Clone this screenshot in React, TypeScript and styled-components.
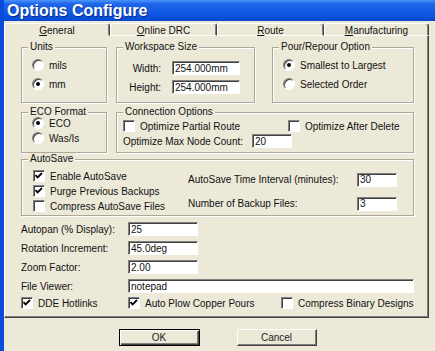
import React from 'react'
import styled, { createGlobalStyle } from 'styled-components'

const GlobalStyle = createGlobalStyle`
  html, body {
    margin: 0;
    padding: 0;
    background: #ece9d8;
  }
  body {
    font-family: 'Liberation Sans', Arial, sans-serif;
    font-size: 10px;
    color: #111;
  }
  * {
    box-sizing: border-box;
  }
`

const Window = styled.div`
  width: 435px;
  height: 351px;
  display: flex;
  flex-direction: column;
  border-left: 4px solid #0b4bdb;
  background: #ece9d8;
  overflow: hidden;
`

const TitleBar = styled.div`
  height: 21px;
  flex: none;
  display: flex;
  align-items: center;
  padding: 1px 0 0 3px;
  background: linear-gradient(180deg, #4a95fb 0%, #1f66ea 18%, #0c55e2 70%, #0848cf 100%);
  color: #fff;
  font-size: 16px;
  font-weight: 700;
  text-shadow: 1px 1px 0 #0a2a8a;
  white-space: nowrap;
`

const TabStrip = styled.div`
  height: 15px;
  flex: none;
  display: flex;
  padding-top: 2px;
`

const Tab = styled.div<{ $w: number; $active?: boolean }>`
  width: ${({ $w }) => $w}px;
  height: 13px;
  display: flex;
  align-items: center;
  justify-content: center;
  padding-top: 2px;
  border-top: 1px solid #fff;
  border-left: 1px solid #fff;
  border-right: 1px solid #404040;
  border-bottom: ${({ $active }) => ($active ? '1px solid #ece9d8' : '1px solid #fff')};
  border-radius: 3px 3px 0 0;
  box-shadow: inset -1px 0 0 #808080;
  white-space: nowrap;

  u {
    text-decoration: underline;
    text-underline-offset: 1px;
  }
`

const Panel = styled.div`
  width: 425px;
  height: 282px;
  flex: none;
  display: flex;
  flex-direction: column;
  padding: 11px 0 0 16px;
  border-left: 1px solid #fff;
  border-right: 1px solid #404040;
  border-bottom: 1px solid #404040;
  box-shadow: inset -1px -1px 0 #808080;
`

const GroupRow = styled.div<{ $mt?: number; $gap: number }>`
  display: flex;
  gap: ${({ $gap }) => $gap}px;
  margin-top: ${({ $mt }) => $mt ?? 0}px;
`

const Group = styled.div<{ $w: number; $h: number; $mr?: number }>`
  width: ${({ $w }) => $w}px;
  height: ${({ $h }) => $h}px;
  margin-right: ${({ $mr }) => $mr ?? 0}px;
  display: flex;
  flex-direction: column;
  border: 1px solid #aca899;
  box-shadow: inset 1px 1px 0 #fff, 1px 1px 0 #fff;
`

const Legend = styled.div`
  align-self: flex-start;
  height: 12px;
  line-height: 12px;
  margin: -7px 0 0 6px;
  padding: 0 2px;
  background: #ece9d8;
  white-space: nowrap;
`

const GroupBody = styled.div<{ $pt: number; $pl: number; $gap?: number }>`
  display: flex;
  flex-direction: column;
  gap: ${({ $gap }) => $gap ?? 5}px;
  margin-top: ${({ $pt }) => $pt}px;
  padding-left: ${({ $pl }) => $pl}px;
`

const Option = styled.label<{ $w?: number }>`
  display: flex;
  align-items: center;
  gap: 5px;
  height: 14px;
  white-space: nowrap;
  width: ${({ $w }) => ($w ? `${$w}px` : 'auto')};
  flex: none;
`

const Radio = styled.span<{ $on?: boolean }>`
  width: 12px;
  height: 12px;
  flex: none;
  display: flex;
  align-items: center;
  justify-content: center;
  border-radius: 50%;
  background: #fff;
  border: 1px solid;
  border-color: #808080 #fff #fff #808080;
  box-shadow: inset 1px 1px 0 #404040;

  &::after {
    content: '';
    width: 4px;
    height: 4px;
    border-radius: 50%;
    background: ${({ $on }) => ($on ? '#000' : 'transparent')};
  }
`

const Box = styled.span`
  width: 12px;
  height: 12px;
  flex: none;
  display: flex;
  align-items: center;
  justify-content: center;
  background: #fff;
  border: 1px solid;
  border-color: #808080 #fff #fff #808080;
  box-shadow: inset 1px 1px 0 #404040;
`

const TextBox = styled.input<{ $w: number }>`
  width: ${({ $w }) => $w}px;
  height: 14px;
  flex: none;
  margin: 0;
  padding: 0 0 0 2px;
  font: inherit;
  color: #111;
  background: #fff;
  border: 1px solid;
  border-color: #808080 #fff #fff #808080;
  box-shadow: inset 1px 1px 0 #404040;
  outline: none;
`

const SizeGrid = styled.div`
  display: grid;
  grid-template-columns: 34px 68px;
  column-gap: 11px;
  row-gap: 5px;
  align-items: center;
  justify-items: end;
  padding: 8px 0 0 10px;
`

const InlineRow = styled.div<{ $gap?: number }>`
  display: flex;
  align-items: center;
  gap: ${({ $gap }) => $gap ?? 0}px;
  height: 14px;
  white-space: nowrap;
`

const AutoSaveBody = styled.div`
  display: flex;
`

const AutoSaveLeft = styled.div`
  width: 166px;
  display: flex;
  flex-direction: column;
  gap: 1px;
  padding: 4px 0 0 11px;
`

const AutoSaveRight = styled.div`
  display: grid;
  grid-template-columns: 169px 40px;
  row-gap: 5px;
  align-items: center;
  padding-top: 5px;
  white-space: nowrap;
`

const Fields = styled.div`
  display: grid;
  grid-template-columns: 107px auto;
  row-gap: 5px;
  align-items: center;
  margin-top: 6px;
  white-space: nowrap;
`

const BottomChecks = styled.div`
  display: grid;
  grid-template-columns: 107px 153px auto;
  align-items: center;
  margin-top: 3px;
`

const ButtonRow = styled.div`
  display: flex;
  justify-content: center;
  gap: 37px;
  padding: 11px 4px 0 0;
`

const Button = styled.button<{ $w: number; $default?: boolean }>`
  width: ${({ $w }) => $w}px;
  height: 17px;
  margin: 0;
  padding: 0;
  font: inherit;
  color: #222;
  background: #ece9d8;
  border: 1px solid;
  border-color: ${({ $default }) => ($default ? '#000' : '#fff #404040 #404040 #fff')};
  box-shadow: ${({ $default }) =>
    $default
      ? 'inset 1px 1px 0 #fff, inset -1px -1px 0 #404040, inset -2px -2px 0 #808080'
      : 'inset -1px -1px 0 #808080'};
`

function Check({ on, label, w }: { on?: boolean; label: string; w?: number }) {
  return (
    <Option $w={w}>
      <Box>
        {on && (
          <svg width="10" height="10" viewBox="0 0 10 10">
            <polyline points="1.5,4.2 3.6,6.4 8,2" fill="none" stroke="#000" strokeWidth="1.8" />
          </svg>
        )}
      </Box>
      {label}
    </Option>
  )
}

function RadioOption({ on, label }: { on?: boolean; label: string }) {
  return (
    <Option>
      <Radio $on={on} />
      {label}
    </Option>
  )
}

const tabs = [
  { key: 'G', rest: 'eneral', w: 106, active: true },
  { key: 'O', rest: 'nline DRC', w: 107 },
  { key: 'R', rest: 'oute', w: 107 },
  { key: 'M', rest: 'anufacturing', w: 105 },
]

export default function App() {
  return (
    <>
      <GlobalStyle />
      <Window>
        <TitleBar>Options Configure</TitleBar>
        <TabStrip>
          {tabs.map((t) => (
            <Tab key={t.key} $w={t.w} $active={t.active}>
              <span>
                <u>{t.key}</u>
                {t.rest}
              </span>
            </Tab>
          ))}
        </TabStrip>
        <Panel>
          <GroupRow $gap={9}>
            <Group $w={86} $h={56}>
              <Legend>Units</Legend>
              <GroupBody $pt={5} $pl={10}>
                <RadioOption label="mils" />
                <RadioOption on label="mm" />
              </GroupBody>
            </Group>
            <Group $w={139} $h={56} $mr={8}>
              <Legend>Workspace Size</Legend>
              <SizeGrid>
                <span>Width:</span>
                <TextBox $w={68} readOnly value="254.000mm" />
                <span>Height:</span>
                <TextBox $w={68} readOnly value="254.000mm" />
              </SizeGrid>
            </Group>
            <Group $w={142} $h={56}>
              <Legend>Pour/Repour Option</Legend>
              <GroupBody $pt={5} $pl={10}>
                <RadioOption on label="Smallest to Largest" />
                <RadioOption label="Selected Order" />
              </GroupBody>
            </Group>
          </GroupRow>

          <GroupRow $gap={9} $mt={9}>
            <Group $w={86} $h={41}>
              <Legend>ECO Format</Legend>
              <GroupBody $pt={-2} $pl={10} $gap={1}>
                <RadioOption on label="ECO" />
                <RadioOption label="Was/Is" />
              </GroupBody>
            </Group>
            <Group $w={298} $h={41}>
              <Legend>Connection Options</Legend>
              <GroupBody $pt={1} $pl={6} $gap={1}>
                <InlineRow>
                  <Check label="Optimize Partial Route" w={165} />
                  <Check label="Optimize After Delete" />
                </InlineRow>
                <InlineRow $gap={9}>
                  <span>Optimize Max Node Count:</span>
                  <TextBox $w={40} readOnly value="20" />
                </InlineRow>
              </GroupBody>
            </Group>
          </GroupRow>

          <GroupRow $gap={0} $mt={6}>
            <Group $w={393} $h={57}>
              <Legend>AutoSave</Legend>
              <AutoSaveBody>
                <AutoSaveLeft>
                  <Check on label="Enable AutoSave" />
                  <Check on label="Purge Previous Backups" />
                  <Check label="Compress AutoSave Files" />
                </AutoSaveLeft>
                <AutoSaveRight>
                  <span>AutoSave Time Interval (minutes):</span>
                  <TextBox $w={40} readOnly value="30" />
                  <span>Number of Backup Files:</span>
                  <TextBox $w={40} readOnly value="3" />
                </AutoSaveRight>
              </AutoSaveBody>
            </Group>
          </GroupRow>

          <Fields>
            <span>Autopan (% Display):</span>
            <TextBox $w={70} readOnly value="25" />
            <span>Rotation Increment:</span>
            <TextBox $w={70} readOnly value="45.0deg" />
            <span>Zoom Factor:</span>
            <TextBox $w={70} readOnly value="2.00" />
            <span>File Viewer:</span>
            <TextBox $w={286} readOnly value="notepad" />
          </Fields>

          <BottomChecks>
            <Check on label="DDE Hotlinks" />
            <Check on label="Auto Plow Copper Pours" />
            <Check label="Compress Binary Designs" />
          </BottomChecks>
        </Panel>
        <ButtonRow>
          <Button $w={81} $default>
            OK
          </Button>
          <Button $w={80}>Cancel</Button>
        </ButtonRow>
      </Window>
    </>
  )
}
